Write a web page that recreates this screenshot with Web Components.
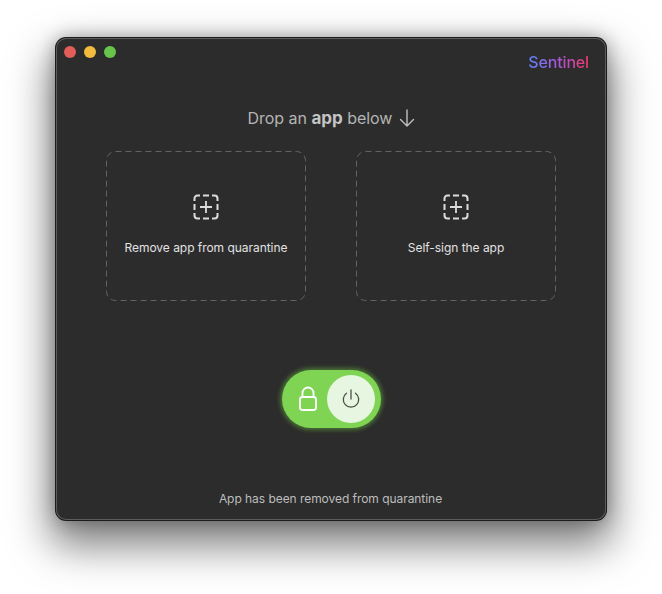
<!DOCTYPE html>
<html>
<head>
<meta charset="utf-8">
<title>Sentinel</title>
<style>
  html, body { margin: 0; padding: 0; background: #fff; }
  body { width: 662px; height: 594px; overflow: hidden; }
</style>
</head>
<body>
<app-window>
  <drop-heading></drop-heading>
  <div slot="zones">
    <drop-zone>Remove app from quarantine</drop-zone>
    <drop-zone>Self-sign the app</drop-zone>
  </div>
  <lock-toggle slot="toggle"></lock-toggle>
  <span slot="status">App has been removed from quarantine</span>
</app-window>

<script>
class AppWindow extends HTMLElement {
  constructor() {
    super();
    this.attachShadow({ mode: 'open' });
    this.shadowRoot.innerHTML = `
      <style>
        :host {
          display: block;
          box-sizing: border-box;
          width: 550px;
          height: 482px;
          margin: 38px 0 0 56px;
          background: #2c2c2c;
          border-radius: 10px;
          box-shadow: inset 0 0 0 1px #5c5c5c, 0 0 0 1px #1c1c1c, 0 20px 40px 6px rgba(0, 0, 0, 0.5), 0 0 18px rgba(0, 0, 0, 0.32);
          font-family: Inter, "Noto Sans", sans-serif;
          color: #e4e4e4;
          position: relative;
        }
        .body {
          display: flex;
          flex-direction: column;
          align-items: center;
          height: 100%;
          box-sizing: border-box;
          padding-top: 68px;
        }
        .lights {
          position: absolute;
          top: 8px;
          left: 8px;
          display: flex;
          gap: 8px;
        }
        .lights i { width: 12px; height: 12px; border-radius: 50%; display: block; }
        .logo {
          position: absolute;
          top: 14px;
          right: 17px;
          font-size: 16px;
          font-weight: 500;
          letter-spacing: -0.15px;
          line-height: 20px;
          background: linear-gradient(90deg, #5f84ff 0%, #aa55d8 50%, #f0386a 100%);
          -webkit-background-clip: text;
          background-clip: text;
          color: transparent;
        }
        ::slotted([slot="zones"]) {
          display: flex;
          gap: 50px;
          margin-top: 21px;
        }
        .toggle { margin-top: 69px; display: flex; }
        .status {
          margin-top: auto;
          padding-bottom: 13px;
          padding-right: 1px;
          font-size: 12px;
          line-height: 16px;
          letter-spacing: -0.05px;
          color: #bdbdbd;
        }
      </style>
      <div class="lights">
        <i style="background:#e35d59"></i>
        <i style="background:#f1bb3e"></i>
        <i style="background:#67c64a"></i>
      </div>
      <div class="logo">Sentinel</div>
      <div class="body">
        <slot></slot>
        <slot name="zones"></slot>
        <div class="toggle"><slot name="toggle"></slot></div>
        <div class="status"><slot name="status"></slot></div>
      </div>
    `;
  }
}

class DropHeading extends HTMLElement {
  constructor() {
    super();
    this.attachShadow({ mode: 'open' });
    this.shadowRoot.innerHTML = `
      <style>
        :host {
          display: flex;
          align-items: center;
          gap: 7px;
          height: 24px;
          padding-left: 1px;
          font-size: 16px;
          letter-spacing: -0.04px;
          color: #b4b4b4;
        }
        b { font-size: 17px; font-weight: 700; color: #c4c4c4; letter-spacing: 0; }
        svg { display: block; }
      </style>
      <span>Drop an <b>app</b> below</span>
      <svg width="16" height="20" viewBox="0 0 16 20" fill="none" stroke="#c0c0c0" stroke-width="1.400" stroke-linecap="round" stroke-linejoin="round">
        <path d="M8 2V18M1.500 11.500L8 18l6.500-6.500"/>
      </svg>
    `;
  }
}

class DropZone extends HTMLElement {
  constructor() {
    super();
    this.attachShadow({ mode: 'open' });
    this.shadowRoot.innerHTML = `
      <style>
        :host {
          display: flex;
          flex-direction: column;
          align-items: center;
          position: relative;
          box-sizing: border-box;
          width: 200px;
          height: 150px;
          padding-top: 43px;
          font-size: 12px;
          line-height: 16px;
          letter-spacing: -0.04px;
          color: #e2e2e2;
        }
        .frame { position: absolute; inset: 0; }
        .icon { display: block; margin-bottom: 20px; }
      </style>
      <svg class="frame" width="200" height="150" fill="none">
        <rect x="0.5" y="0.5" width="199" height="149" rx="9" stroke="#626262" stroke-dasharray="6 4"/>
      </svg>
      <svg class="icon" width="26" height="26" viewBox="0 0 26 26" fill="none" stroke="#dcdcdc" stroke-width="2">
        <path d="M1.500 7V4.500a3 3 0 0 1 3-3H7M10 1.500h6M19 1.500h2.500a3 3 0 0 1 3 3V7M24.500 10v6M24.500 19v2.500a3 3 0 0 1-3 3H19M16 24.500h-6M7 24.500H4.500a3 3 0 0 1-3-3V19M1.500 16v-6"/>
        <path d="M13 7v12M7 13h12" stroke-width="1.800"/>
      </svg>
      <slot></slot>
    `;
  }
}

class LockToggle extends HTMLElement {
  constructor() {
    super();
    this.attachShadow({ mode: 'open' });
    this.shadowRoot.innerHTML = `
      <style>
        :host {
          display: flex;
          align-items: center;
          justify-content: space-between;
          box-sizing: border-box;
          width: 99px;
          height: 58px;
          padding: 0 6px 0 16px;
          border-radius: 29px;
          background: #7fd453;
          box-shadow: 0 0 4px 2px rgba(95, 165, 60, 0.6);
        }
        .knob {
          width: 48px;
          height: 48px;
          border-radius: 50%;
          background: #e6f6e0;
          display: flex;
          align-items: center;
          justify-content: center;
        }
        svg { display: block; }
      </style>
      <svg width="20" height="26" viewBox="0 0 20 26" fill="none" stroke="#fff" stroke-width="1.800" stroke-linejoin="round">
        <path d="M4.500 11V7a5.500 5.500 0 0 1 11 0v4"/>
        <rect x="2" y="11" width="16" height="13" rx="2.500"/>
      </svg>
      <div class="knob">
        <svg width="20" height="20" viewBox="0 0 20 20" fill="none" stroke="#4a4f48" stroke-width="1.300" stroke-linecap="round">
          <path d="M10 1v9"/>
          <path d="M5.500 4.200a7.700 7.700 0 1 0 9 0"/>
        </svg>
      </div>
    `;
  }
}

customElements.define('app-window', AppWindow);
customElements.define('drop-heading', DropHeading);
customElements.define('drop-zone', DropZone);
customElements.define('lock-toggle', LockToggle);
</script>
</body>
</html>
